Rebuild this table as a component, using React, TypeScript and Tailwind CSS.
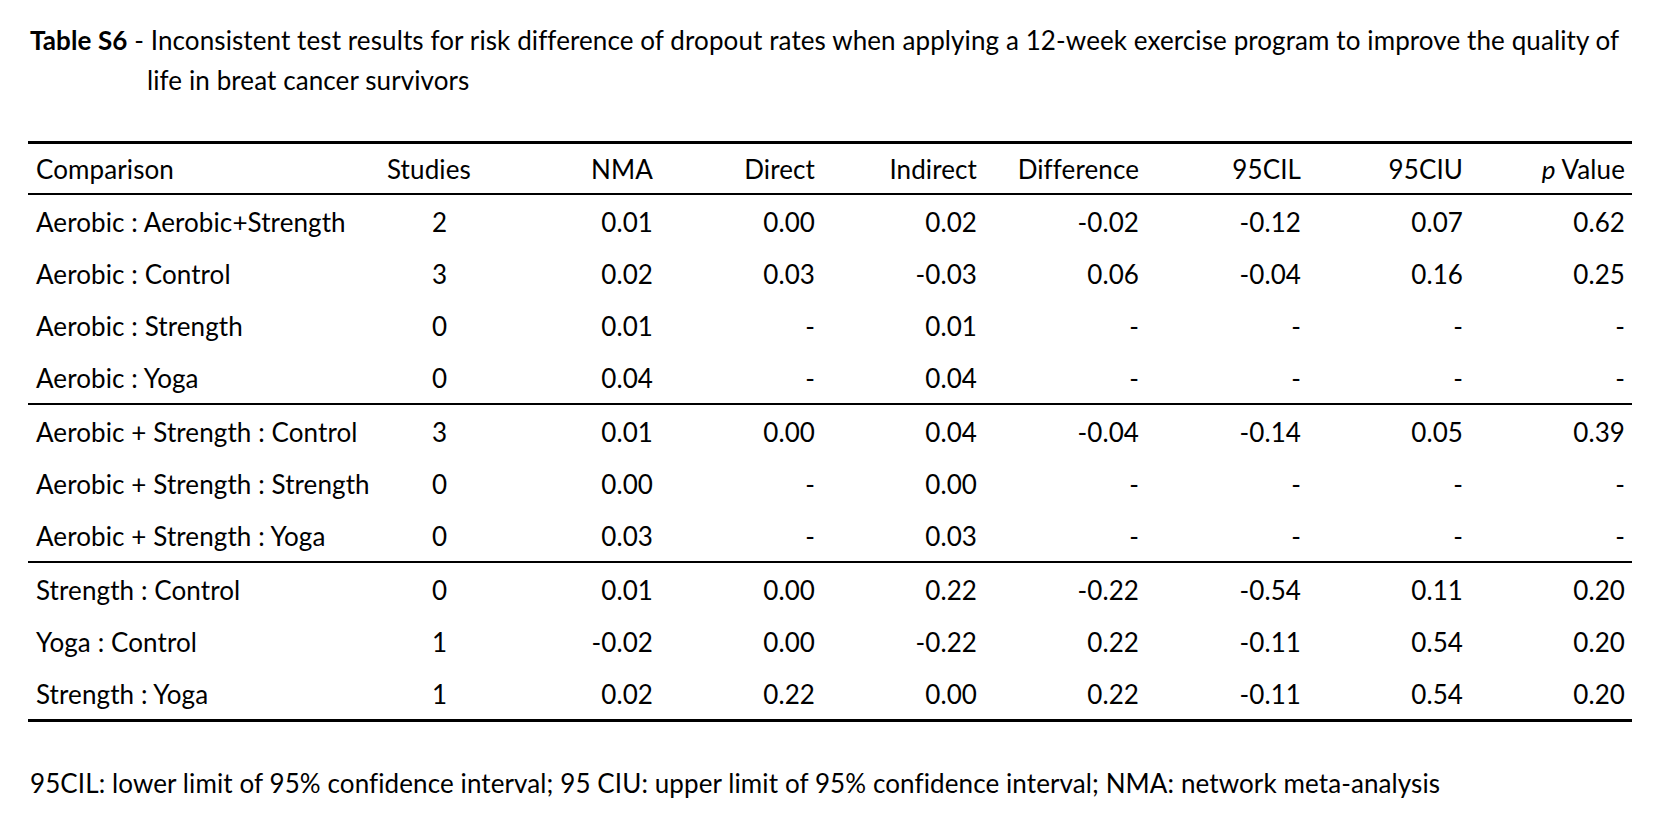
type Row = {
  comparison: string;
  studies: string;
  values: string[];
};

const groups: Row[][] = [
  [
    { comparison: "Aerobic : Aerobic+Strength", studies: "2", values: ["0.01", "0.00", "0.02", "-0.02", "-0.12", "0.07", "0.62"] },
    { comparison: "Aerobic : Control", studies: "3", values: ["0.02", "0.03", "-0.03", "0.06", "-0.04", "0.16", "0.25"] },
    { comparison: "Aerobic : Strength", studies: "0", values: ["0.01", "-", "0.01", "-", "-", "-", "-"] },
    { comparison: "Aerobic : Yoga", studies: "0", values: ["0.04", "-", "0.04", "-", "-", "-", "-"] },
  ],
  [
    { comparison: "Aerobic + Strength : Control", studies: "3", values: ["0.01", "0.00", "0.04", "-0.04", "-0.14", "0.05", "0.39"] },
    { comparison: "Aerobic + Strength : Strength", studies: "0", values: ["0.00", "-", "0.00", "-", "-", "-", "-"] },
    { comparison: "Aerobic + Strength : Yoga", studies: "0", values: ["0.03", "-", "0.03", "-", "-", "-", "-"] },
  ],
  [
    { comparison: "Strength : Control", studies: "0", values: ["0.01", "0.00", "0.22", "-0.22", "-0.54", "0.11", "0.20"] },
    { comparison: "Yoga : Control", studies: "1", values: ["-0.02", "0.00", "-0.22", "0.22", "-0.11", "0.54", "0.20"] },
    { comparison: "Strength : Yoga", studies: "1", values: ["0.02", "0.22", "0.00", "0.22", "-0.11", "0.54", "0.20"] },
  ],
];

const cols = "grid grid-cols-[350px_113px_repeat(7,162px)] items-center";

function DataRow({ row }: { row: Row }) {
  return (
    <div className={`${cols} h-[52px] pt-[2px]`}>
      <div className="pl-[8px]">{row.comparison}</div>
      <div className="pl-[54px]">{row.studies}</div>
      {row.values.map((v, i) => (
        <div key={i} className="text-right">
          {v}
        </div>
      ))}
    </div>
  );
}

export default function App() {
  return (
    <div className="min-h-screen bg-white font-['Lato',sans-serif] text-[26px] tracking-[0.1px] text-black">
      <div className="pt-[20px] pl-[30px] leading-[40px]">
        <p>
          <span className="font-bold">Table S6</span> - Inconsistent test results for risk difference of dropout rates when applying a 12-week exercise program to improve the quality of
        </p>
        <p className="pl-[117px]">life in breat cancer survivors</p>
      </div>

      <div className="mt-[41px] ml-[28px] w-[1604px] border-t-[3px] border-b-[3px] border-black">
        <div className={`${cols} h-[51px] pt-[2px] border-b-2 border-black`}>
          <div className="pl-[8px]">Comparison</div>
          <div className="pl-[9px]">Studies</div>
          <div className="text-right">NMA</div>
          <div className="text-right">Direct</div>
          <div className="text-right">Indirect</div>
          <div className="text-right">Difference</div>
          <div className="text-right">95CIL</div>
          <div className="text-right">95CIU</div>
          <div className="text-right">
            <span className="italic">p</span> Value
          </div>
        </div>
        {groups.map((g, gi) => (
          <div key={gi} className={gi > 0 ? "border-t-2 border-black" : ""}>
            {g.map((r) => (
              <DataRow key={r.comparison} row={r} />
            ))}
          </div>
        ))}
      </div>

      <p className="mt-[42px] pl-[30px] leading-[39px]">
        95CIL: lower limit of 95% confidence interval; 95 CIU: upper limit of 95% confidence interval; NMA: network meta-analysis
      </p>
    </div>
  );
}
